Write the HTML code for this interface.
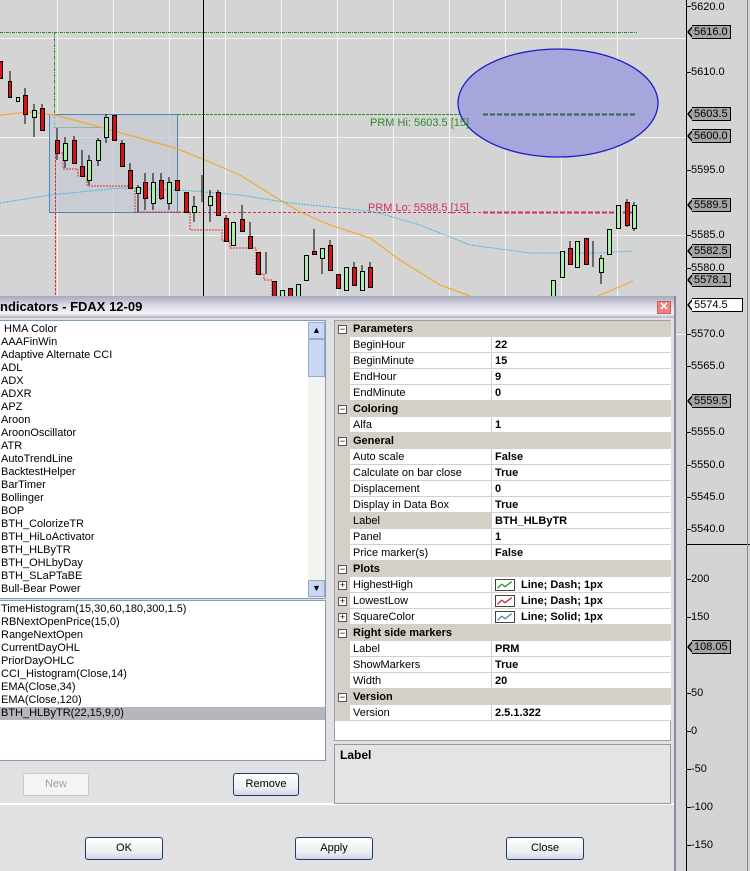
<!DOCTYPE html>
<html><head><meta charset="utf-8"><style>
*{margin:0;padding:0;box-sizing:border-box}
body{width:750px;height:871px;overflow:hidden;background:#d4d4d4;font-family:"Liberation Sans",sans-serif;font-size:11px;position:relative}
.abs{position:absolute}
.ax{position:absolute;left:691px;font-size:11px;color:#000;line-height:12px}
.tk{position:absolute;left:686px;width:5px;height:1px;background:#000}
.mk{position:absolute;left:687px;height:14px;font-size:11px;line-height:12px}
.mk span{position:absolute;left:5px;top:0;height:14px;border:1px solid #000;border-left:none;background:#a4a4a4;padding:0 2px;line-height:12px}
.mk i{position:absolute;left:0;top:0;width:0;height:0;border-top:7px solid transparent;border-bottom:7px solid transparent;border-right:6px solid #000}
.mk b{position:absolute;left:2px;top:1px;width:0;height:0;border-top:6px solid transparent;border-bottom:6px solid transparent;border-right:5px solid #a4a4a4}
.dlg{position:absolute;left:0;top:296px;width:676px;height:575px;background:#e1e1e3;border-right:2px solid #8a8aa0}
.title{position:absolute;left:0;top:0;width:674px;height:22px;background:linear-gradient(#a7a7bd,#d9d9e6 40%,#f3f3f7 80%,#b0b0c2);font-weight:bold;font-size:13px;line-height:22px;padding-left:0}
.close{position:absolute;left:657px;top:5px;width:14px;height:13px;background:#f08080;border:1px solid #d06060;color:#fff;font-size:11px;line-height:11px;text-align:center;font-weight:bold}
.list{position:absolute;background:#fff;border:1px solid #7f9db9}
.list div{height:13px;line-height:13px;font-size:11px;padding-left:1px;white-space:nowrap}
.btn{position:absolute;height:23px;border:1px solid #1c3c74;border-radius:3px;background:linear-gradient(#fff,#ececf2 70%,#d4d4e0);text-align:center;line-height:21px;font-size:11px}
.grid{position:absolute;left:334px;top:320px;width:337px;height:421px;background:#fff;border:1px solid #a0a0a0}
.row{position:absolute;left:0;width:336px;height:16px;font-size:11px;line-height:17px}
.row .n{position:absolute;left:15px;width:142px;height:16px;padding-left:3px;border-bottom:1px solid #d4d0c8;border-right:1px solid #d4d0c8;background:#fff}
.row .v{position:absolute;left:157px;width:179px;height:16px;padding-left:3px;font-weight:bold;border-bottom:1px solid #d4d0c8;background:#fff}
.row.c{background:#d4d0c8;font-weight:bold}
.row.c .t{position:absolute;left:18px}
.row .g{position:absolute;left:0;width:15px;height:16px;background:#d4d0c8}
.pm{position:absolute;left:3px;top:4px;width:9px;height:9px;border:1px solid #555;background:#fff;font-size:9px;line-height:7px;text-align:center;font-weight:normal}
.ic{position:absolute;left:3px;top:2px;width:20px;height:12px;border:1px solid #444;background:#fff}
</style></head><body>
<svg class="abs" style="left:0;top:0" width="750" height="871">
<rect x="0" y="0" width="750" height="871" fill="#d4d4d4"/>
<g stroke="#f4f4f4" stroke-width="1">
<line x1="57.5" y1="0" x2="57.5" y2="544"/><line x1="113.5" y1="0" x2="113.5" y2="544"/><line x1="169.5" y1="0" x2="169.5" y2="544"/><line x1="225.5" y1="0" x2="225.5" y2="544"/><line x1="281.5" y1="0" x2="281.5" y2="544"/><line x1="337.5" y1="0" x2="337.5" y2="544"/><line x1="393.5" y1="0" x2="393.5" y2="544"/><line x1="449.5" y1="0" x2="449.5" y2="544"/><line x1="505.5" y1="0" x2="505.5" y2="544"/><line x1="561.5" y1="0" x2="561.5" y2="544"/><line x1="617.5" y1="0" x2="617.5" y2="544"/>
<line x1="0" y1="38.5" x2="686" y2="38.5"/><line x1="0" y1="137.5" x2="686" y2="137.5"/><line x1="0" y1="235.5" x2="686" y2="235.5"/><line x1="0" y1="334.5" x2="686" y2="334.5"/>
</g>
<line x1="0" y1="32.5" x2="637" y2="32.5" stroke="#2a8a2a" stroke-dasharray="3,1,1,1"/>
<line x1="54.5" y1="32" x2="54.5" y2="127" stroke="#2a8a2a" stroke-dasharray="3,1,1,1"/>
<line x1="54" y1="127.5" x2="100" y2="127.5" stroke="#2a8a2a"/>
<line x1="178" y1="114.5" x2="483" y2="114.5" stroke="#2a8a2a" stroke-dasharray="3,1"/>
<rect x="49.5" y="114.5" width="128" height="98" fill="#c4c9d3" fill-opacity="0.7" stroke="#4a86c0"/>
<ellipse cx="558" cy="103" rx="100" ry="54" fill="#a6a6dc" stroke="#1c1ccc" stroke-width="1.3"/>
<line x1="483" y1="114.5" x2="637" y2="114.5" stroke="#2f6a4f" stroke-width="2" stroke-dasharray="5,2"/>
<line x1="178" y1="212.5" x2="483" y2="212.5" stroke="#d0305a" stroke-dasharray="3,2"/>
<line x1="483" y1="212.5" x2="632" y2="212.5" stroke="#d0305a" stroke-width="2" stroke-dasharray="5,2"/>
<line x1="55.5" y1="152" x2="55.5" y2="296" stroke="#e03030" stroke-dasharray="3,1"/>
<polyline fill="none" stroke="#e03030" stroke-dasharray="2,1" points="55,153 63,153 63,169 78,169 78,176 87,176 87,186 128,186 128,188 135,188 135,212 183,212 190,212 190,230 222,230 222,241 230,241 230,248 256,248 256,274 264,274 264,280 272,280 272,296"/>
<text x="370" y="126" fill="#2a8a2a" font-size="11" font-family="Liberation Sans">PRM Hi: 5603.5 [15]</text>
<text x="368" y="211" fill="#d0305a" font-size="11" font-family="Liberation Sans">PRM Lo: 5588.5 [15]</text>
<polyline fill="none" stroke="#f0a830" stroke-width="1.2" points="0,115 30,112 55,115 100,127 175,148 205,160 240,175 275,197 300,212 330,225 370,238 400,260 440,285 470,296"/>
<polyline fill="none" stroke="#f0a830" stroke-width="1.2" points="598,296 633,281"/>
<polyline fill="none" stroke="#40b8e0" stroke-dasharray="2,1" points="0,203 50,195 120,188 180,190 240,195 290,203 340,208 375,212 420,225 470,245 530,253 600,253 633,251"/>
<line x1="203.5" y1="0" x2="203.5" y2="296" stroke="#000"/>
<g stroke="#000" stroke-width="1">
<line x1="10" y1="71" x2="10" y2="97"/><line x1="25" y1="88" x2="25" y2="124"/><line x1="34" y1="104" x2="34" y2="137"/><line x1="42" y1="104" x2="42" y2="130"/><line x1="57" y1="128" x2="57" y2="160"/><line x1="65" y1="137" x2="65" y2="168"/><line x1="74" y1="136" x2="74" y2="163"/><line x1="82" y1="150" x2="82" y2="176"/><line x1="89" y1="155" x2="89" y2="185"/><line x1="98" y1="138" x2="98" y2="166"/><line x1="106" y1="114" x2="106" y2="143"/><line x1="122" y1="140" x2="122" y2="166"/><line x1="130" y1="163" x2="130" y2="188"/><line x1="138" y1="185" x2="138" y2="212"/><line x1="145" y1="173" x2="145" y2="210"/><line x1="153" y1="173" x2="153" y2="210"/><line x1="161" y1="173" x2="161" y2="200"/><line x1="169" y1="177" x2="169" y2="210"/><line x1="194" y1="196" x2="194" y2="222"/><line x1="202" y1="175" x2="202" y2="202"/><line x1="210" y1="190" x2="210" y2="222"/><line x1="218" y1="190" x2="218" y2="215"/><line x1="226" y1="215" x2="226" y2="241"/><line x1="242" y1="205" x2="242" y2="231"/><line x1="250" y1="222" x2="250" y2="248"/><line x1="266" y1="252" x2="266" y2="274"/><line x1="314" y1="229" x2="314" y2="254"/><line x1="322" y1="248" x2="322" y2="274"/><line x1="330" y1="240" x2="330" y2="270"/><line x1="354" y1="262" x2="354" y2="285"/><line x1="362" y1="265" x2="362" y2="290"/><line x1="370" y1="262" x2="370" y2="287"/><line x1="570" y1="241" x2="570" y2="264"/><line x1="593" y1="241" x2="593" y2="267"/><line x1="601" y1="255" x2="601" y2="284"/><line x1="627" y1="199" x2="627" y2="227"/><line x1="634" y1="202" x2="634" y2="231"/>
</g>
<g stroke="#000" fill="#dd1010">
<rect x="-2.5" y="61.5" width="5" height="17"/><rect x="8.5" y="81.5" width="3" height="16"/><rect x="23.5" y="95.5" width="4" height="19"/><rect x="40.5" y="108.5" width="4" height="22"/><rect x="55.5" y="140.5" width="4" height="13"/><rect x="72.5" y="140.5" width="4" height="23"/><rect x="80.5" y="166.5" width="4" height="10"/><rect x="112.5" y="115.5" width="4" height="25"/><rect x="120.5" y="143.5" width="4" height="23"/><rect x="128.5" y="170.5" width="4" height="18"/><rect x="143.5" y="182.5" width="4" height="16"/><rect x="159.5" y="180.5" width="4" height="18"/><rect x="175.5" y="180.5" width="4" height="10"/><rect x="184.5" y="192.5" width="4" height="20"/><rect x="216.5" y="192.5" width="4" height="23"/><rect x="224.5" y="218.5" width="4" height="23"/><rect x="240.5" y="219.5" width="4" height="12"/><rect x="248.5" y="236.5" width="4" height="12"/><rect x="256.5" y="252.5" width="4" height="22"/><rect x="272.5" y="281.5" width="4" height="15"/><rect x="288.5" y="288.5" width="4" height="8"/><rect x="312.5" y="251.5" width="4" height="3"/><rect x="328.5" y="245.5" width="4" height="25"/><rect x="336.5" y="274.5" width="4" height="14"/><rect x="352.5" y="267.5" width="4" height="18"/><rect x="368.5" y="267.5" width="4" height="20"/><rect x="568.5" y="248.5" width="4" height="16"/><rect x="584.5" y="238.5" width="4" height="26"/><rect x="625.5" y="202.5" width="4" height="23"/>
</g>
<g stroke="#000" fill="#a8f0a8">
<rect x="16.5" y="97.5" width="3" height="4"/><rect x="32.5" y="110.5" width="4" height="7"/><rect x="63.5" y="143.5" width="4" height="17"/><rect x="87.5" y="160.5" width="4" height="20"/><rect x="96.5" y="140.5" width="4" height="20"/><rect x="104.5" y="117.5" width="4" height="20"/><rect x="136.5" y="187.5" width="4" height="6"/><rect x="151.5" y="182.5" width="4" height="21"/><rect x="167.5" y="182.5" width="4" height="21"/><rect x="192.5" y="206.5" width="4" height="6"/><rect x="208.5" y="196.5" width="4" height="9"/><rect x="231.5" y="222.5" width="4" height="23"/><rect x="280.5" y="290.5" width="4" height="6"/><rect x="296.5" y="284.5" width="4" height="12"/><rect x="304.5" y="255.5" width="4" height="25"/><rect x="320.5" y="248.5" width="4" height="10"/><rect x="344.5" y="267.5" width="4" height="23"/><rect x="360.5" y="271.5" width="4" height="19"/><rect x="551.5" y="280.5" width="4" height="16"/><rect x="560.5" y="251.5" width="4" height="26"/><rect x="575.5" y="241.5" width="4" height="26"/><rect x="599.5" y="258.5" width="4" height="14"/><rect x="607.5" y="229.5" width="4" height="25"/><rect x="616.5" y="205.5" width="4" height="23"/><rect x="632.5" y="205.5" width="4" height="23"/>
</g>
<line x1="686.5" y1="0" x2="686.5" y2="871" stroke="#000"/>
<line x1="686" y1="544.5" x2="750" y2="544.5" stroke="#000"/>
<line x1="747.5" y1="0" x2="747.5" y2="871" stroke="#888"/>
</svg>

<div class="tk" style="top:6px"></div><div class="ax" style="top:1px">5620.0</div>
<div class="tk" style="top:72px"></div><div class="ax" style="top:66px">5610.0</div>
<div class="tk" style="top:170px"></div><div class="ax" style="top:164px">5595.0</div>
<div class="tk" style="top:235px"></div><div class="ax" style="top:229px">5585.0</div>
<div class="tk" style="top:268px"></div><div class="ax" style="top:262px">5580.0</div>
<div class="tk" style="top:334px"></div><div class="ax" style="top:328px">5570.0</div>
<div class="tk" style="top:366px"></div><div class="ax" style="top:360px">5565.0</div>
<div class="tk" style="top:432px"></div><div class="ax" style="top:426px">5555.0</div>
<div class="tk" style="top:465px"></div><div class="ax" style="top:459px">5550.0</div>
<div class="tk" style="top:497px"></div><div class="ax" style="top:491px">5545.0</div>
<div class="tk" style="top:529px"></div><div class="ax" style="top:523px">5540.0</div>
<div class="tk" style="top:579px"></div><div class="ax" style="top:573px">200</div>
<div class="tk" style="top:617px"></div><div class="ax" style="top:611px">150</div>
<div class="tk" style="top:693px"></div><div class="ax" style="top:687px">50</div>
<div class="tk" style="top:731px"></div><div class="ax" style="top:725px">0</div>
<div class="tk" style="top:769px"></div><div class="ax" style="top:763px">-50</div>
<div class="tk" style="top:807px"></div><div class="ax" style="top:801px">-100</div>
<div class="tk" style="top:845px"></div><div class="ax" style="top:839px">-150</div>
<div class="mk" style="top:25px"><i></i><b></b><span>5616.0</span></div>
<div class="mk" style="top:107px"><i></i><b></b><span>5603.5</span></div>
<div class="mk" style="top:129px"><i></i><b></b><span>5600.0</span></div>
<div class="mk" style="top:198px"><i></i><b></b><span>5589.5</span></div>
<div class="mk" style="top:244px"><i></i><b></b><span>5582.5</span></div>
<div class="mk" style="top:273px"><i></i><b></b><span>5578.1</span></div>
<div class="mk" style="top:298px"><i></i><b style="border-right-color:#fff"></b><span style="background:#fff;width:51px">5574.5</span></div>
<div class="mk" style="top:394px"><i></i><b></b><span>5559.5</span></div>
<div class="mk" style="top:640px"><i></i><b></b><span>108.05</span></div>

<div class="dlg">
<div class="title">ndicators - FDAX 12-09</div>
<div class="close">✕</div>
</div>
<div class="list" style="left:-1px;top:320px;width:327px;height:279px;padding-top:2px">
<div>&nbsp;HMA Color</div><div>AAAFinWin</div><div>Adaptive Alternate CCI</div><div>ADL</div><div>ADX</div><div>ADXR</div><div>APZ</div><div>Aroon</div><div>AroonOscillator</div><div>ATR</div><div>AutoTrendLine</div><div>BacktestHelper</div><div>BarTimer</div><div>Bollinger</div><div>BOP</div><div>BTH_ColorizeTR</div><div>BTH_HiLoActivator</div><div>BTH_HLByTR</div><div>BTH_OHLbyDay</div><div>BTH_SLaPTaBE</div><div>Bull-Bear Power</div>
</div>
<div class="abs" style="left:308px;top:321px;width:17px;height:277px;background:#f2f2ef"></div>
<div class="abs" style="left:308px;top:322px;width:17px;height:17px;background:#c8d8f4;border:1px solid #9ab;font-size:9px;text-align:center;line-height:15px">▲</div>
<div class="abs" style="left:308px;top:339px;width:17px;height:38px;background:#c8d8f4;border:1px solid #9ab"></div>
<div class="abs" style="left:308px;top:580px;width:17px;height:17px;background:#c8d8f4;border:1px solid #9ab;font-size:9px;text-align:center;line-height:15px">▼</div>
<div class="list" style="left:-1px;top:600px;width:327px;height:161px;padding-top:2px">
<div>TimeHistogram(15,30,60,180,300,1.5)</div><div>RBNextOpenPrice(15,0)</div><div>RangeNextOpen</div><div>CurrentDayOHL</div><div>PriorDayOHLC</div><div>CCI_Histogram(Close,14)</div><div>EMA(Close,34)</div><div>EMA(Close,120)</div><div style="background:#b5b6be">BTH_HLByTR(22,15,9,0)</div>
</div>
<div class="btn" style="left:23px;top:773px;width:66px;border-color:#c8c8c8;background:#f4f4f2;color:#a0a0a0">New</div>
<div class="btn" style="left:233px;top:773px;width:66px">Remove</div>
<div class="abs" style="left:0;top:803px;width:674px;height:2px;background:#fff"></div>
<div class="btn" style="left:85px;top:837px;width:78px">OK</div>
<div class="btn" style="left:295px;top:837px;width:78px">Apply</div>
<div class="btn" style="left:506px;top:837px;width:78px">Close</div>

<div class="grid">
<div class="row c" style="top:0"><div class="pm">−</div><span class="t">Parameters</span></div>
<div class="row" style="top:16px"><div class="g"></div><div class="n">BeginHour</div><div class="v">22</div></div>
<div class="row" style="top:32px"><div class="g"></div><div class="n">BeginMinute</div><div class="v">15</div></div>
<div class="row" style="top:48px"><div class="g"></div><div class="n">EndHour</div><div class="v">9</div></div>
<div class="row" style="top:64px"><div class="g"></div><div class="n">EndMinute</div><div class="v">0</div></div>
<div class="row c" style="top:80px"><div class="pm">−</div><span class="t">Coloring</span></div>
<div class="row" style="top:96px"><div class="g"></div><div class="n">Alfa</div><div class="v">1</div></div>
<div class="row c" style="top:112px"><div class="pm">−</div><span class="t">General</span></div>
<div class="row" style="top:128px"><div class="g"></div><div class="n">Auto scale</div><div class="v">False</div></div>
<div class="row" style="top:144px"><div class="g"></div><div class="n">Calculate on bar close</div><div class="v">True</div></div>
<div class="row" style="top:160px"><div class="g"></div><div class="n">Displacement</div><div class="v">0</div></div>
<div class="row" style="top:176px"><div class="g"></div><div class="n">Display in Data Box</div><div class="v">True</div></div>
<div class="row" style="top:192px"><div class="g"></div><div class="n" style="background:#d4d0c8">Label</div><div class="v">BTH_HLByTR</div></div>
<div class="row" style="top:208px"><div class="g"></div><div class="n">Panel</div><div class="v">1</div></div>
<div class="row" style="top:224px"><div class="g"></div><div class="n">Price marker(s)</div><div class="v">False</div></div>
<div class="row c" style="top:240px"><div class="pm">−</div><span class="t">Plots</span></div>
<div class="row" style="top:256px"><div class="g"><div class="pm">+</div></div><div class="n">HighestHigh</div><div class="v"><svg class="ic" viewBox="0 0 20 12"><polyline points="1,10 6,5 10,8 18,2" fill="none" stroke="#1a9a1a" stroke-width="1.5"/></svg><span style="margin-left:26px">Line; Dash; 1px</span></div></div>
<div class="row" style="top:272px"><div class="g"><div class="pm">+</div></div><div class="n">LowestLow</div><div class="v"><svg class="ic" viewBox="0 0 20 12"><polyline points="1,10 6,5 10,8 18,2" fill="none" stroke="#d02040" stroke-width="1.5"/></svg><span style="margin-left:26px">Line; Dash; 1px</span></div></div>
<div class="row" style="top:288px"><div class="g"><div class="pm">+</div></div><div class="n">SquareColor</div><div class="v"><svg class="ic" viewBox="0 0 20 12"><polyline points="1,10 6,5 10,8 18,2" fill="none" stroke="#5080c0" stroke-width="1.5"/></svg><span style="margin-left:26px">Line; Solid; 1px</span></div></div>
<div class="row c" style="top:304px"><div class="pm">−</div><span class="t">Right side markers</span></div>
<div class="row" style="top:320px"><div class="g"></div><div class="n">Label</div><div class="v">PRM</div></div>
<div class="row" style="top:336px"><div class="g"></div><div class="n">ShowMarkers</div><div class="v">True</div></div>
<div class="row" style="top:352px"><div class="g"></div><div class="n">Width</div><div class="v">20</div></div>
<div class="row c" style="top:368px"><div class="pm">−</div><span class="t">Version</span></div>
<div class="row" style="top:384px"><div class="g"></div><div class="n">Version</div><div class="v">2.5.1.322</div></div>
</div>
<div class="abs" style="left:334px;top:744px;width:337px;height:60px;background:#e4e4e6;border:1px solid #999;font-weight:bold;font-size:12px;padding:3px 0 0 5px">Label</div>
</body></html>
